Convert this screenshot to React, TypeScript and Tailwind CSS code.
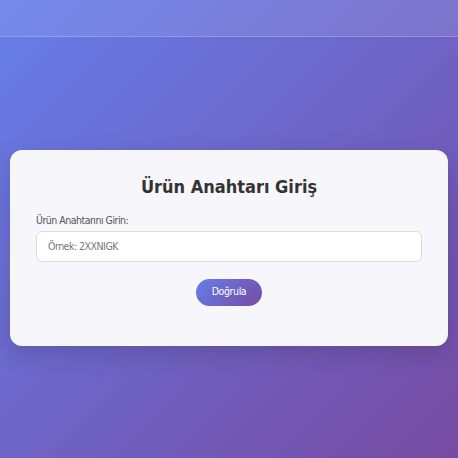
import React from "react";

export default function App() {
  return (
    <div
      className="w-[458px] h-[458px] overflow-hidden flex flex-col bg-[linear-gradient(135deg,#667eea_0%,#764ba2_100%)]"
      style={{ fontFamily: "'DejaVu Sans Condensed', Tahoma, 'DejaVu Sans', sans-serif" }}
    >
      <div className="h-[37px] shrink-0 bg-white/10 border-b border-white/20" />
      <div className="flex-1 flex items-center px-[10px]">
        <div className="w-full bg-[#f7f6fb] rounded-[12px] shadow-[0_8px_24px_rgba(0,0,0,0.15)] px-[26px] pt-[26px] pb-[40px] flex flex-col">
          <h1 className="text-center text-[18px] font-bold text-[#333] leading-[22px]">
            Ürün Anahtarı Giriş
          </h1>
          <label className="mt-[16px] text-[10.5px] text-[#555] leading-[13px] tracking-[-0.5px]">
            Ürün Anahtarını Girin:
          </label>
          <input
            className="mt-[4px] h-[31px] rounded-[6px] border border-[#ddd] bg-white px-[11px] text-[10.5px] leading-[16px] text-[#333] placeholder:text-[#777] outline-none tracking-[-0.5px]"
            placeholder="Örnek: 2XXNIGK"
            style={{ fontFamily: "inherit" }}
          />
          <div className="flex justify-center mt-[17px]">
            <button className="h-[27px] w-[66px] rounded-full text-white text-[10.5px] tracking-[-0.4px] bg-[linear-gradient(135deg,#667eea_0%,#764ba2_100%)]" style={{ fontFamily: "inherit" }}>
              Doğrula
            </button>
          </div>
        </div>
      </div>
    </div>
  );
}
